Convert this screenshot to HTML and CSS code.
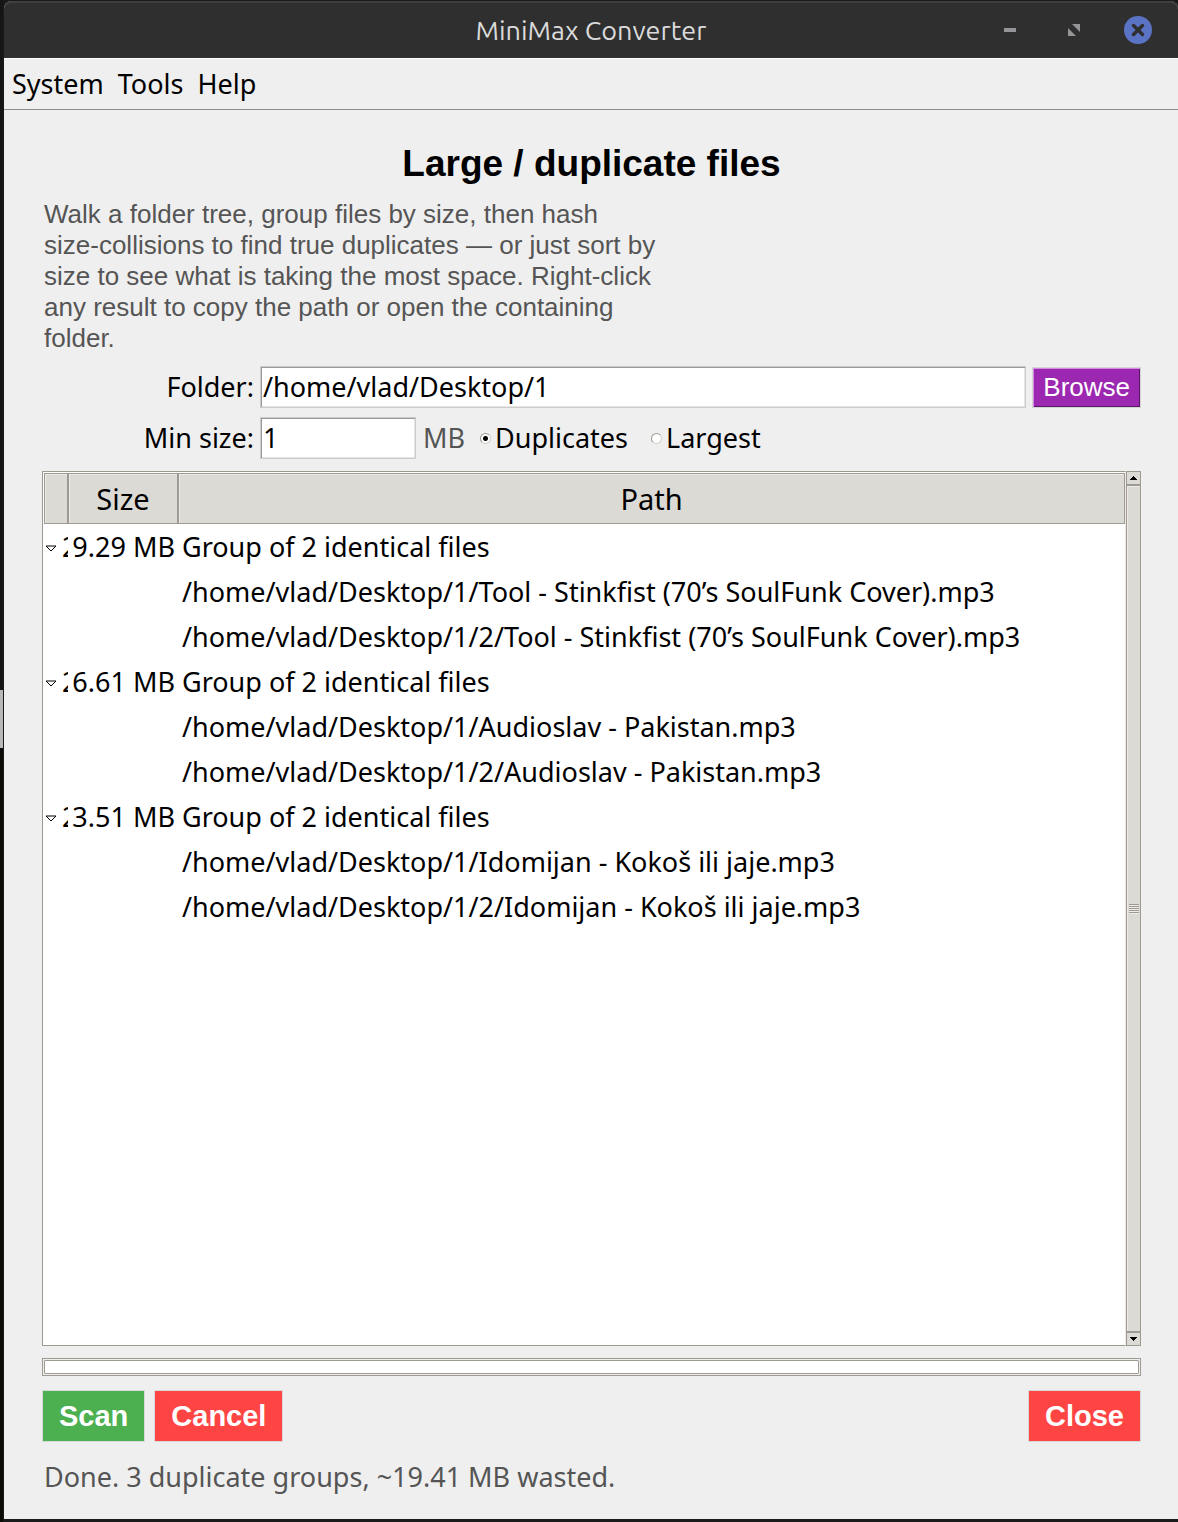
FILE: index.html
```
<!DOCTYPE html>
<html lang="en">
<head>
  <meta charset="UTF-8">
  <title>MiniMax Converter</title>
  <link rel="stylesheet" href="styles.css">
</head>
<body>
  <div class="window">
    <header class="titlebar">
      <span class="titlebar-name">MiniMax Converter</span>
      <div class="titlebar-buttons">
        <button type="button" aria-label="Minimize">
          <svg width="28" height="28" viewBox="0 0 28 28"><path d="M8 12h12v4H8z" fill="#949499"/></svg>
        </button>
        <button type="button" aria-label="Restore">
          <svg width="28" height="28" viewBox="0 0 28 28"><path d="M12 8h8v8zM8 12l8 8H8z" fill="#949499"/></svg>
        </button>
        <button type="button" aria-label="Close window">
          <svg width="28" height="28" viewBox="0 0 28 28"><circle cx="14" cy="14" r="14" fill="#5b73c4"/><path d="M9.500 9.500l9 9M18.500 9.500l-9 9" stroke="#2f2f2f" stroke-width="3.500" stroke-linecap="round"/></svg>
        </button>
      </div>
    </header>

    <nav class="menubar">
      <button type="button">System</button>
      <button type="button">Tools</button>
      <button type="button">Help</button>
    </nav>

    <main class="content">
      <h1>Large / duplicate files</h1>
      <p class="description">Walk a folder tree, group files by size, then hash <span class="nowrap">size-collisions</span> to find true duplicates — or just sort by size to see what is taking the most space. Right-click any result to copy the path or open the containing folder.</p>

      <div class="form">
        <label for="folder">Folder:</label>
        <input class="entry" type="text" id="folder" value="/home/vlad/Desktop/1">
        <button type="button" class="browse">Browse</button>

        <label for="minsize">Min size:</label>
        <div class="size-row">
          <input class="entry entry-small" type="text" id="minsize" value="1">
          <span class="unit">MB</span>
          <label class="radio"><input type="radio" name="mode" checked>Duplicates</label>
          <label class="radio"><input type="radio" name="mode">Largest</label>
        </div>
      </div>

      <div class="results">
        <div class="tree">
          <table>
            <thead>
              <tr><th class="col-tree"></th><th class="col-size">Size</th><th>Path</th></tr>
            </thead>
            <tbody>
              <tr>
                <td class="group"><svg width="12" height="7" viewBox="0 0 12 7"><path d="M1 1h10L6 6z" fill="#fff" stroke="#000"/></svg>2</td>
                <td class="size">9.29 MB</td>
                <td>Group of 2 identical files</td>
              </tr>
              <tr><td></td><td></td><td>/home/vlad/Desktop/1/Tool - Stinkfist (70’s SoulFunk Cover).mp3</td></tr>
              <tr><td></td><td></td><td>/home/vlad/Desktop/1/2/Tool - Stinkfist (70’s SoulFunk Cover).mp3</td></tr>
              <tr>
                <td class="group"><svg width="12" height="7" viewBox="0 0 12 7"><path d="M1 1h10L6 6z" fill="#fff" stroke="#000"/></svg>2</td>
                <td class="size">6.61 MB</td>
                <td>Group of 2 identical files</td>
              </tr>
              <tr><td></td><td></td><td>/home/vlad/Desktop/1/Audioslav - Pakistan.mp3</td></tr>
              <tr><td></td><td></td><td>/home/vlad/Desktop/1/2/Audioslav - Pakistan.mp3</td></tr>
              <tr>
                <td class="group"><svg width="12" height="7" viewBox="0 0 12 7"><path d="M1 1h10L6 6z" fill="#fff" stroke="#000"/></svg>2</td>
                <td class="size">3.51 MB</td>
                <td>Group of 2 identical files</td>
              </tr>
              <tr><td></td><td></td><td>/home/vlad/Desktop/1/Idomijan - Kokoš ili jaje.mp3</td></tr>
              <tr><td></td><td></td><td>/home/vlad/Desktop/1/2/Idomijan - Kokoš ili jaje.mp3</td></tr>
            </tbody>
          </table>
        </div>
        <div class="scrollbar">
          <button type="button" aria-label="Scroll up"><svg width="7" height="4" viewBox="0 0 7 4"><path d="M3 0h1v1h1v1h1v1h1v1H0V3h1V2h1V1h1z"/></svg></button>
          <div class="thumb"><span class="grip"></span></div>
          <button type="button" aria-label="Scroll down"><svg width="7" height="4" viewBox="0 0 7 4"><path d="M0 0h7v1H6v1H5v1H4v1H3V3H2V2H1V1H0z"/></svg></button>
        </div>
      </div>

      <div class="progress" role="progressbar" aria-valuenow="0" aria-label="Scan progress"><div class="progress-inner"></div></div>

      <div class="actions">
        <button type="button" class="action scan">Scan</button>
        <button type="button" class="action cancel">Cancel</button>
        <button type="button" class="action cancel close">Close</button>
      </div>

      <p class="status">Done. 3 duplicate groups, ~19.41 MB wasted.</p>
    </main>
  </div>
</body>
</html>
```

FILE: styles.css
```
* { box-sizing: border-box; }
body {
  margin: 0;
  min-height: 100vh;
  padding: 1px 0 3px 4px;
  display: flex;
  background: linear-gradient(#151515 690px, #b8b8b8 690px, #b8b8b8 748px, #0d0b08 748px) 0 0 / 3px 100% no-repeat, #1b1a1a;
  font-family: "Noto Sans", sans-serif;
  font-size: 27px;
  line-height: 36px;
  color: #000;
}
button, input { font: inherit; color: inherit; margin: 0; }
button { border: 0; padding: 0; background: none; }
svg { display: block; }
.nowrap { white-space: nowrap; }

.window {
  flex: 1;
  min-width: 0;
  display: flex;
  flex-direction: column;
  background: #efefef;
  border-radius: 8px 8px 0 0;
}

.titlebar {
  height: 57px;
  display: grid;
  grid-template-columns: 1fr auto 1fr;
  align-items: center;
  padding: 0 26px;
  background: #2f2f2f;
  box-shadow: inset 0 2px #3f3f3f;
  border-radius: 8px 8px 0 0;
  color: #dadada;
}
.titlebar-name { grid-column: 2; font-family: Ubuntu, "Noto Sans", sans-serif; font-size: 27px; }
.titlebar-buttons { display: flex; justify-content: flex-end; gap: 36px; }

.menubar {
  display: flex;
  gap: 14px;
  height: 52px;
  padding: 0 8px;
  border-top: 1px solid #fff;
  border-bottom: 1px solid #8e8e8e;
}

.content {
  flex: 1;
  display: flex;
  flex-direction: column;
  padding: 32px 37px 24px 38px;
}
h1 {
  margin: 0;
  font: bold 37px/44px "Liberation Sans", Arial, sans-serif;
  text-align: center;
}
.description {
  margin: 13px 2px 0;
  max-width: 630px;
  font: 26px/31px "Liberation Sans", Arial, sans-serif;
  color: #555;
}

.form {
  display: grid;
  grid-template-columns: 212px 1fr auto;
  align-items: center;
  gap: 9px 6px;
  margin-top: 12px;
}
.form > label { text-align: right; }
.entry {
  width: 100%;
  height: 42px;
  padding: 0 2px 2px;
  background: #fff;
  border: 1px solid #ccc;
  box-shadow: inset 1px 1px #999, inset -1px -1px #e4e4e4;
  outline: 0;
}
.entry-small { width: 156px; }
.browse {
  height: 41px;
  padding: 0 10px;
  background: #9c27b0;
  color: #fff;
  font-family: "Liberation Sans", Arial, sans-serif;
  font-size: 26px;
  border: 1px solid #d4d4d4;
  box-shadow: inset 1px 1px #d58ae2, inset -1px -1px #5b1767;
}
.size-row { grid-column: 2 / 4; display: flex; align-items: center; }
.unit { margin: 0 15px 0 7px; color: #555; }
.radio { display: flex; align-items: center; gap: 4px; margin-right: 23px; }
.radio input {
  appearance: none;
  width: 11px;
  height: 11px;
  border: 1px solid;
  border-color: #9e9a91 #d4d0c8 #d4d0c8 #9e9a91;
  border-radius: 50%;
  background: #fff;
}
.radio input:checked { background: radial-gradient(circle, #000 2px, #fff 3px); }

.results { flex: 1; display: flex; margin-top: 12px; }
.tree {
  flex: 1;
  min-width: 0;
  padding: 1px 0 0 1px;
  background: #fff;
  border: 1px solid #9e9a91;
  border-right-color: #eeebe7;
}
table { width: 100%; table-layout: fixed; border-collapse: separate; border-spacing: 0; }
th {
  height: 51px;
  padding: 0;
  background: #dcdad5;
  border: 1px solid #9e9a91;
  box-shadow: inset 1px 1px #eeebe7;
  font-size: 29px;
  font-weight: 400;
}
.col-tree { width: 24px; }
.col-size { width: 110px; }
td { height: 45px; padding: 0 4px; white-space: nowrap; }
td:first-child { padding: 0; overflow: hidden; }
.group svg { display: inline-block; margin: 0 5px 1px 1px; vertical-align: middle; }
td.size { padding: 0 3px; text-align: right; }

.scrollbar { width: 15px; display: flex; flex-direction: column; }
.scrollbar button {
  height: 14px;
  display: flex;
  align-items: center;
  justify-content: center;
  background: #dcdad5;
  border: 1px solid #9e9a91;
}
.thumb {
  flex: 1;
  display: flex;
  align-items: center;
  justify-content: center;
  background: #dcdad5;
  border: 1px solid #9e9a91;
  box-shadow: inset 1px 1px #eeebe7;
}
.grip { width: 10px; height: 10px; background: repeating-linear-gradient(#9e9a91 0 1px, #eeebe7 1px 2px); }

.progress { height: 18px; margin-top: 12px; padding: 1px; border: 1px solid #9e9a91; }
.progress-inner { height: 14px; background: #fff; border: 1px solid #9e9a91; border-radius: 1px; }

.actions { display: flex; gap: 9px; margin-top: 14px; }
.action {
  height: 52px;
  padding: 0 16px;
  border: 1px solid #d9d9d9;
  color: #fff;
  font: bold 29px/34px "Liberation Sans", Arial, sans-serif;
}
.scan { background: #4caf50; }
.cancel { background: #f44; }
.close { margin-left: auto; }

.status { margin: 17px 2px 0; color: #555; }
```
